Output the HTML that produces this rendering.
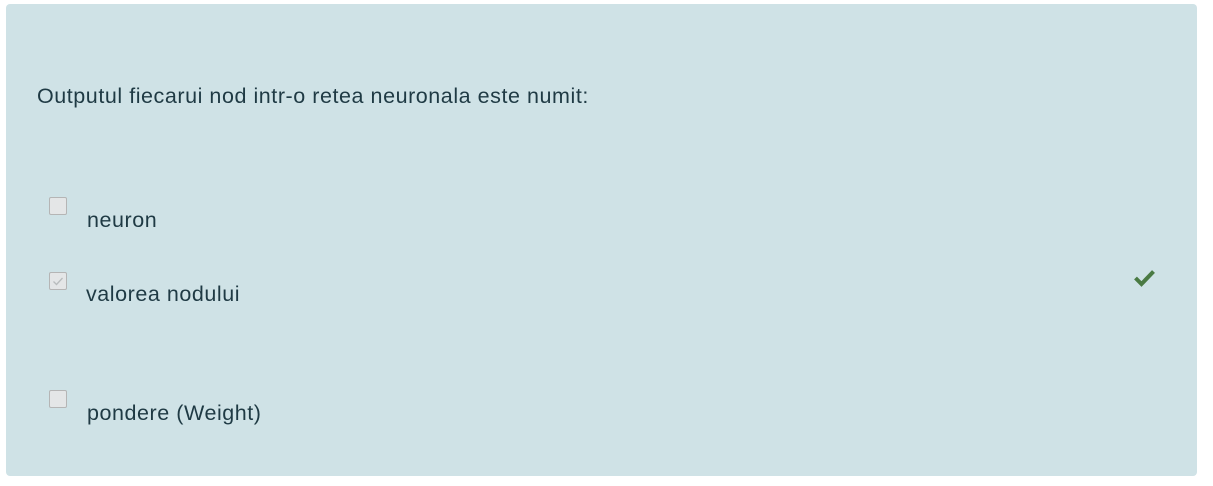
<!DOCTYPE html>
<html><head><style>
body{margin:0;background:#fff;width:1213px;height:486px;position:relative;font-family:"Liberation Sans",sans-serif;color:#1f3a44}
.p{position:absolute;left:6px;top:4px;width:1191px;height:472px;background:#cfe2e6;border-radius:4px}
.t{position:absolute;font-size:21.5px;letter-spacing:0.55px;line-height:24px;white-space:nowrap}
.cb{position:absolute;width:16px;height:16px;border:1px solid #b5b5b5;background:#e4e6e7;border-radius:2px}
</style></head><body>
<div class="p"></div>
<div class="t" style="left:37px;top:84px">Outputul fiecarui nod intr-o retea neuronala este numit:</div>
<div class="cb" style="left:49px;top:197px"></div>
<div class="t" style="left:87px;top:208px">neuron</div>
<div class="cb" style="left:49px;top:272px"><svg width="16" height="16" viewBox="0 0 16 16" style="position:absolute;left:0;top:0"><path d="M3.5 8.5l3 3 6-6.5" fill="none" stroke="#b8bcbd" stroke-width="1.3"/></svg></div>
<div class="t" style="left:86px;top:282px">valorea nodului</div>
<div class="cb" style="left:49px;top:390px"></div>
<div class="t" style="left:87px;top:401px">pondere (Weight)</div>
<svg style="position:absolute;left:1133px;top:268px" width="23" height="19" viewBox="0 0 23 19"><path d="M2.5 10l6 6L20.5 3.5" fill="none" stroke="#4a7a43" stroke-width="4" stroke-linejoin="miter"/></svg>
</body></html>
